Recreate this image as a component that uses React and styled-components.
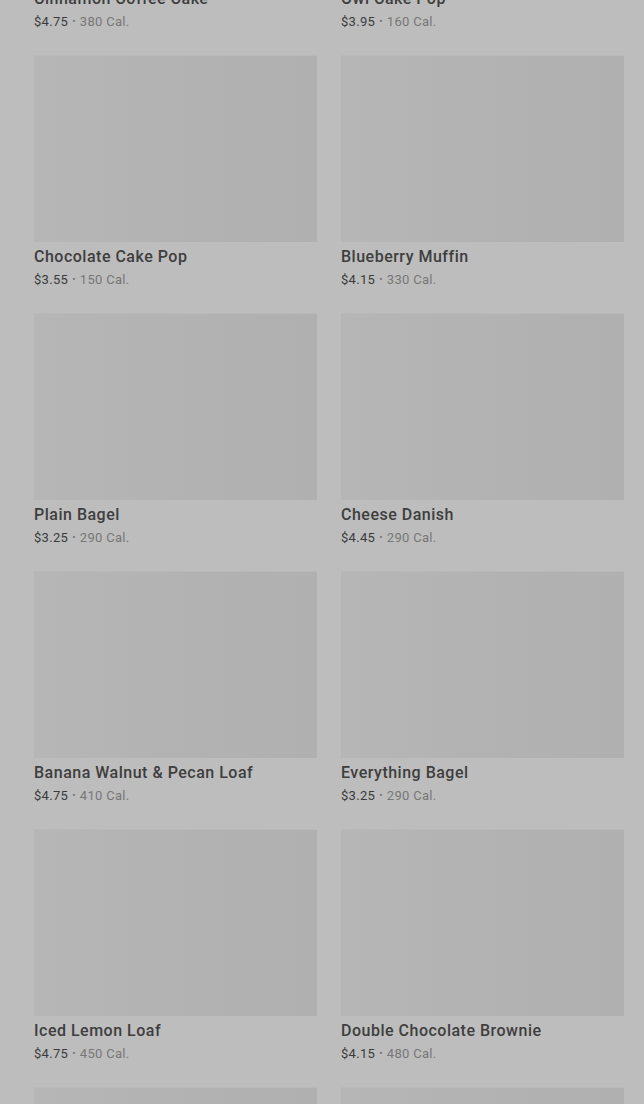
import React from "react";
import styled, { createGlobalStyle } from "styled-components";

const Global = createGlobalStyle`
  html, body { margin: 0; padding: 0; background: #bdbdbd; }
  body { font-family: Roboto, "Liberation Sans", sans-serif; overflow: hidden; }
`;

const Page = styled.div`
  width: 644px;
  height: 1104px;
  overflow: hidden;
  background: #bdbdbd;
`;

const Grid = styled.div`
  display: grid;
  grid-template-columns: 283px 283px;
  column-gap: 24px;
  row-gap: 25px;
  padding-left: 34px;
  margin-top: -203px;
`;

const Card = styled.div`
  display: flex;
  flex-direction: column;
`;

const Thumb = styled.div`
  height: 187px;
  background: linear-gradient(90deg, #b6b6b6 0%, #b3b3b3 40%, #b0b0b0 100%);
  border-top: 1px solid #b9b9b9;
  box-sizing: border-box;
`;

const Name = styled.div`
  margin-top: 5px;
  height: 20px;
  font-size: 16px;
  line-height: 20px;
  font-weight: 500;
  letter-spacing: 0.5px;
  color: #3e3e3e;
  white-space: nowrap;
`;

const Meta = styled.div`
  margin-top: 5px;
  height: 16px;
  display: flex;
  align-items: center;
  font-size: 13px;
  line-height: 16px;
  letter-spacing: 0.3px;
  color: #777777;
  white-space: nowrap;
`;

const Price = styled.span`
  color: #3b3b3b;
`;

const Dot = styled.span`
  margin: 0 4px;
  color: #7a7a7a;
  font-size: 10px;
  line-height: 1;
`;

const items = [
  ["Cinnamon Coffee Cake", "$4.75", "380"],
  ["Owl Cake Pop", "$3.95", "160"],
  ["Chocolate Cake Pop", "$3.55", "150"],
  ["Blueberry Muffin", "$4.15", "330"],
  ["Plain Bagel", "$3.25", "290"],
  ["Cheese Danish", "$4.45", "290"],
  ["Banana Walnut & Pecan Loaf", "$4.75", "410"],
  ["Everything Bagel", "$3.25", "290"],
  ["Iced Lemon Loaf", "$4.75", "450"],
  ["Double Chocolate Brownie", "$4.15", "480"],
  ["Butter Croissant", "$3.45", "260"],
  ["Chocolate Croissant", "$3.95", "300"],
];

export default function App() {
  return (
    <Page>
      <Global />
      <Grid>
        {items.map(([name, price, cal]) => (
          <Card key={name}>
            <Thumb />
            <Name>{name}</Name>
            <Meta>
              <Price>{price}</Price>
              <Dot>•</Dot>
              {cal} Cal.
            </Meta>
          </Card>
        ))}
      </Grid>
    </Page>
  );
}
